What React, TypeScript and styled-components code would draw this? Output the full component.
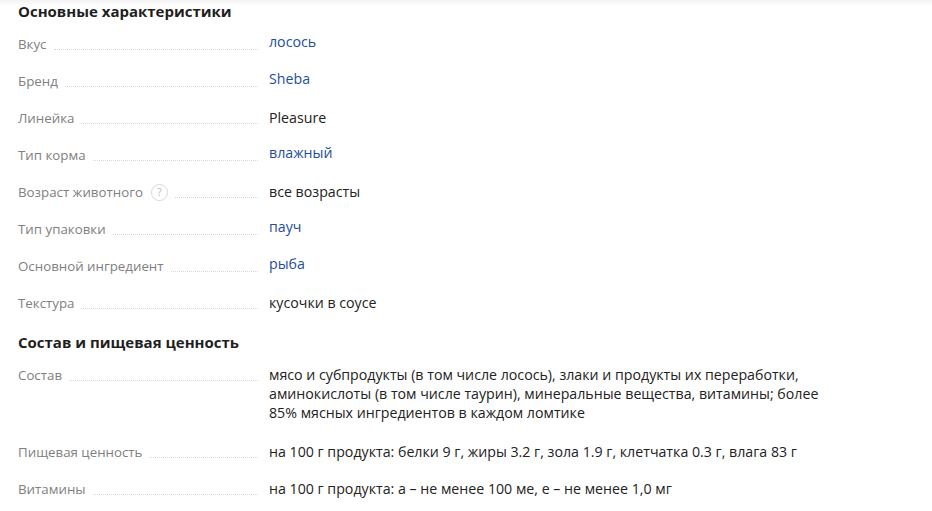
import { Fragment } from 'react';
import styled, { createGlobalStyle } from 'styled-components';

const GlobalStyle = createGlobalStyle`
  html, body {
    margin: 0;
    padding: 0;
    background: #ffffff;
  }
  body {
    font-family: 'Open Sans', 'Noto Sans', Arial, sans-serif;
    color: #222;
  }
`;

type Spec = {
  label: string;
  value: string;
  link?: boolean;
  help?: boolean;
  wrap?: boolean;
};

const mainSpecs: Spec[] = [
  { label: 'Вкус', value: 'лосось', link: true },
  { label: 'Бренд', value: 'Sheba', link: true },
  { label: 'Линейка', value: 'Pleasure' },
  { label: 'Тип корма', value: 'влажный', link: true },
  { label: 'Возраст животного', value: 'все возрасты', help: true },
  { label: 'Тип упаковки', value: 'пауч', link: true },
  { label: 'Основной ингредиент', value: 'рыба', link: true },
  { label: 'Текстура', value: 'кусочки в соусе' },
];

const compositionSpecs: Spec[] = [
  {
    label: 'Состав',
    value:
      'мясо и субпродукты (в том числе лосось), злаки и продукты их переработки, аминокислоты (в том числе таурин), минеральные вещества, витамины; более 85% мясных ингредиентов в каждом ломтике',
    wrap: true,
  },
  {
    label: 'Пищевая ценность',
    value:
      'на 100 г продукта: белки 9 г, жиры 3.2 г, зола 1.9 г, клетчатка 0.3 г, влага 83 г',
  },
  {
    label: 'Витамины',
    value: 'на 100 г продукта: а – не менее 100 ме, е – не менее 1,0 мг',
  },
];

const Page = styled.div`
  padding: 1px 18px 0;
  background: linear-gradient(#f3f3f3 0, #ffffff 6px);
`;

const Heading = styled.h2<{ $gap?: number }>`
  margin: ${(p) => p.$gap ?? 0}px 0 0;
  font-size: 15px;
  font-weight: 700;
  line-height: 20px;
  color: #1f1f1f;
`;

const SpecList = styled.dl`
  display: grid;
  grid-template-columns: 251px 560px;
  row-gap: 17px;
  margin: 13px 0 0;
`;

const Term = styled.dt`
  display: flex;
  align-items: flex-start;
  margin: 0;
  padding-right: 11px;
  font-size: 13.3px;
  line-height: 20px;
  color: #808080;
`;

const TermText = styled.span`
  flex: none;
  white-space: nowrap;
`;

const Leader = styled.span`
  flex: 1;
  height: 15px;
  margin-left: 7px;
  border-bottom: 1px dotted #d8d8d8;
`;

const Help = styled.span`
  flex: none;
  width: 15px;
  height: 15px;
  margin: 2px 0 0 8px;
  border: 1px solid #d8d8d8;
  border-radius: 50%;
  font-size: 10px;
  line-height: 15px;
  text-align: center;
  color: #b8b8b8;
`;

const Value = styled.dd<{ $link?: boolean; $wrap?: boolean }>`
  margin: 0;
  padding-bottom: ${(p) => (p.$wrap ? '3px' : '0')};
  font-size: 14.2px;
  line-height: 19px;
  color: ${(p) => (p.$link ? '#1e4e9c' : '#222')};
  position: relative;
  top: ${(p) => (p.$link ? '-2px' : '0')};
`;

function Specs({ items }: { items: Spec[] }) {
  return (
    <SpecList>
      {items.map((s) => (
        <Fragment key={s.label}>
          <Term>
            <TermText>{s.label}</TermText>
            {s.help && <Help>?</Help>}
            <Leader />
          </Term>
          <Value $link={s.link} $wrap={s.wrap}>
            {s.value}
          </Value>
        </Fragment>
      ))}
    </SpecList>
  );
}

export default function App() {
  return (
    <Page>
      <GlobalStyle />
      <Heading>Основные характеристики</Heading>
      <Specs items={mainSpecs} />
      <Heading $gap={19}>Состав и пищевая ценность</Heading>
      <Specs items={compositionSpecs} />
    </Page>
  );
}
